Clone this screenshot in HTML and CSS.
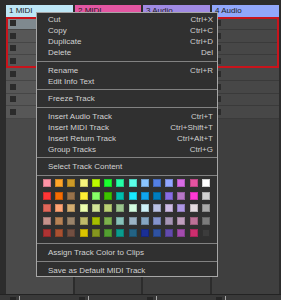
FILE: index.html
```html
<!DOCTYPE html>
<html>
<head>
<link rel="stylesheet" href="styles.css">
<title>Track menu</title>
</head>
<body>
<div class="tracks">
  <div class="track sel-track">
    <div class="head head-1">1 MIDI</div>
    <div class="sel">
      <div class="slot slot-hi"><span class="stop"></span></div>
      <div class="slot"><span class="stop"></span></div>
      <div class="slot"><span class="stop"></span></div>
      <div class="slot"><span class="stop"></span></div>
    </div>
    <div class="slot"><span class="stop"></span></div>
    <div class="slot"><span class="stop"></span></div>
    <div class="slot"><span class="stop"></span></div>
    <div class="slot"><span class="stop"></span></div>
    <div class="fill"></div>
  </div>
  <div class="track">
    <div class="head head-2">2 MIDI</div>
    <div class="fill"></div>
  </div>
  <div class="track">
    <div class="head head-3">3 Audio</div>
    <div class="fill"></div>
  </div>
  <div class="track">
    <div class="head head-4">4 Audio</div>
    <div class="sel">
      <div class="slot"><span class="stop"></span></div>
      <div class="slot"><span class="stop"></span></div>
      <div class="slot"><span class="stop"></span></div>
      <div class="slot"><span class="stop"></span></div>
    </div>
    <div class="slot"><span class="stop"></span></div>
    <div class="slot"><span class="stop"></span></div>
    <div class="slot"><span class="stop"></span></div>
    <div class="slot"><span class="stop"></span></div>
    <div class="fill"></div>
  </div>
</div>
<div class="foot">
  <div class="foot-cell"><span class="fstop"></span><span class="tick"></span></div>
  <div class="foot-cell"><span class="fstop"></span><span class="tick"></span></div>
  <div class="foot-cell"><span class="fstop"></span><span class="tick"></span></div>
  <div class="foot-cell"><span class="fstop"></span><span class="tick"></span></div>
</div>

<div class="menu">
  <div class="group first">
    <div class="item"><span>Cut</span><span class="key">Ctrl+X</span></div>
    <div class="item"><span>Copy</span><span class="key">Ctrl+C</span></div>
    <div class="item"><span>Duplicate</span><span class="key">Ctrl+D</span></div>
    <div class="item"><span>Delete</span><span class="key">Del</span></div>
  </div>
  <div class="group">
    <div class="item"><span>Rename</span><span class="key">Ctrl+R</span></div>
    <div class="item"><span>Edit Info Text</span></div>
  </div>
  <div class="group">
    <div class="item"><span>Freeze Track</span></div>
  </div>
  <div class="group">
    <div class="item"><span>Insert Audio Track</span><span class="key">Ctrl+T</span></div>
    <div class="item"><span>Insert MIDI Track</span><span class="key">Ctrl+Shift+T</span></div>
    <div class="item"><span>Insert Return Track</span><span class="key">Ctrl+Alt+T</span></div>
    <div class="item"><span>Group Tracks</span><span class="key">Ctrl+G</span></div>
  </div>
  <div class="group">
    <div class="item"><span>Select Track Content</span></div>
  </div>
  <div class="palette">
    <span style="background:#ff94a6"></span><span style="background:#ffa529"></span><span style="background:#cc9927"></span><span style="background:#f7f47c"></span><span style="background:#bffb00"></span><span style="background:#1aff2f"></span><span style="background:#25ffa8"></span><span style="background:#5cffe8"></span><span style="background:#8bc5ff"></span><span style="background:#5480e4"></span><span style="background:#92a7ff"></span><span style="background:#d86ce4"></span><span style="background:#e553a0"></span><span style="background:#ffffff"></span>
    <span style="background:#ff3636"></span><span style="background:#f66c03"></span><span style="background:#99724b"></span><span style="background:#fff034"></span><span style="background:#87ff67"></span><span style="background:#3dc300"></span><span style="background:#00bfaf"></span><span style="background:#19e9ff"></span><span style="background:#10a4ee"></span><span style="background:#007dc0"></span><span style="background:#886ce4"></span><span style="background:#b677c6"></span><span style="background:#ff39d4"></span><span style="background:#d0d0d0"></span>
    <span style="background:#e2675a"></span><span style="background:#ffa374"></span><span style="background:#d3ad71"></span><span style="background:#edffae"></span><span style="background:#d2e498"></span><span style="background:#bad074"></span><span style="background:#9bc48d"></span><span style="background:#d4fde1"></span><span style="background:#cdf1f8"></span><span style="background:#b9c1e3"></span><span style="background:#cdbbe4"></span><span style="background:#ae98e5"></span><span style="background:#e5dce1"></span><span style="background:#a9a9a9"></span>
    <span style="background:#c6928b"></span><span style="background:#b78256"></span><span style="background:#99836a"></span><span style="background:#bfba69"></span><span style="background:#a6be00"></span><span style="background:#7db04d"></span><span style="background:#88c2ba"></span><span style="background:#9bb3c4"></span><span style="background:#85a5c2"></span><span style="background:#8393cc"></span><span style="background:#a595b5"></span><span style="background:#bf9fbe"></span><span style="background:#bc7196"></span><span style="background:#7b7b7b"></span>
    <span style="background:#af3333"></span><span style="background:#a95131"></span><span style="background:#724f41"></span><span style="background:#dbc300"></span><span style="background:#85961f"></span><span style="background:#539f31"></span><span style="background:#0a9c8e"></span><span style="background:#236384"></span><span style="background:#1a2f96"></span><span style="background:#2f52a2"></span><span style="background:#624bad"></span><span style="background:#a34bad"></span><span style="background:#cc2e6e"></span><span style="background:#3c3c3c"></span>
  </div>
  <div class="group">
    <div class="item"><span>Assign Track Color to Clips</span></div>
  </div>
  <div class="group last">
    <div class="item"><span>Save as Default MIDI Track</span></div>
  </div>
</div>
</body>
</html>
```

FILE: styles.css
```css
body {
  margin: 0;
  width: 281px;
  height: 300px;
  overflow: hidden;
  background: #2c2c2c;
  font-family: "Liberation Sans", Arial, sans-serif;
  font-size: 8px;
}
.tracks {
  display: grid;
  grid-template-columns: 67px 66px 67px 67px;
  column-gap: 2px;
  height: 289px;
  padding: 5px 0 0 6px;
}
.track {
  display: flex;
  flex-direction: column;
  background: #3f3f3f;
}
.head {
  height: 12px;
  line-height: 12px;
  padding-left: 3px;
  color: #1d1d1d;
  white-space: nowrap;
  overflow: hidden;
}
.head-1 { background: #bde6f6; }
.head-2 { background: #e356a2; }
.head-3 { background: #a08ae4; }
.head-4 { background: #91a7fb; }

.sel {
  position: relative;
}
.sel::after {
  content: "";
  position: absolute;
  inset: 0;
  border: 2px solid #c8141c;
}
.slot {
  height: 11.75px;
  border-bottom: 1px solid #3a3a3a;
  background: #474747;
  display: flex;
  align-items: center;
  padding-left: 3px;
}
.sel-track .slot {
  background: #575757;
  border-bottom-color: #464646;
  padding-left: 4px;
}
.sel-track .slot-hi {
  background: #7f898f;
}
.stop {
  width: 6px;
  height: 6px;
  background: #2b2b2b;
}
.fill {
  flex: 1;
}
.sel-track .fill {
  background: #4a4a4a;
}

.foot {
  display: grid;
  grid-template-columns: 67px 66px 67px 67px;
  column-gap: 2px;
  padding-left: 6px;
  border-top: 1px solid #232323;
  height: 5px;
  background: #393939;
}
.foot-cell {
  display: flex;
  align-items: flex-end;
  padding-left: 4px;
  gap: 3px;
}
.fstop {
  width: 6px;
  height: 3px;
  background: #262626;
}
.tick {
  width: 1px;
  height: 4px;
  background: #a8a8a8;
}

.menu {
  position: absolute;
  left: 36px;
  top: 12px;
  width: 180px;
  height: 263px;
  border: 1px solid #a6a6a6;
  background: #303030;
  color: #d2d2d2;
}
.group {
  padding: 2.75px 0;
  border-bottom: 1px solid #828282;
}
.group.first {
  padding-top: 1px;
}
.group.last {
  border-bottom: none;
}
.item {
  height: 11px;
  line-height: 11px;
  display: flex;
  justify-content: space-between;
  padding: 0 4px 0 11px;
  white-space: nowrap;
}
.key {
  color: #cfcfcf;
}
.palette {
  display: grid;
  grid-template-columns: repeat(14, 8px);
  justify-content: space-between;
  row-gap: 4.5px;
  padding: 3.5px 7px 6px 6px;
  border-bottom: 1px solid #828282;
}
.palette span {
  width: 8px;
  height: 8px;
  box-shadow: inset 0 0 0 1px rgba(0, 0, 0, 0.18);
}
```
